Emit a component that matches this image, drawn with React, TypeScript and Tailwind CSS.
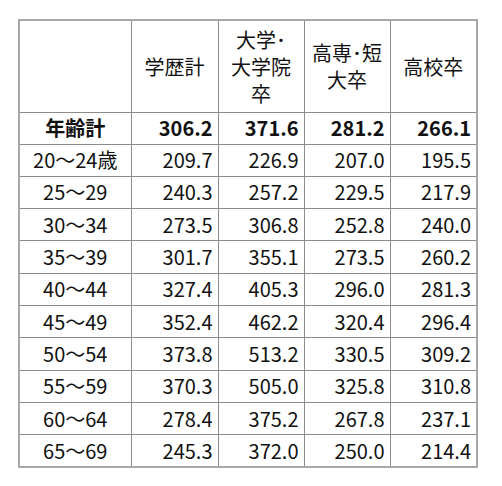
import React from 'react';

const rows: [string, string, string, string, string][] = [
  ['20～24歳', '209.7', '226.9', '207.0', '195.5'],
  ['25～29', '240.3', '257.2', '229.5', '217.9'],
  ['30～34', '273.5', '306.8', '252.8', '240.0'],
  ['35～39', '301.7', '355.1', '273.5', '260.2'],
  ['40～44', '327.4', '405.3', '296.0', '281.3'],
  ['45～49', '352.4', '462.2', '320.4', '296.4'],
  ['50～54', '373.8', '513.2', '330.5', '309.2'],
  ['55～59', '370.3', '505.0', '325.8', '310.8'],
  ['60～64', '278.4', '375.2', '267.8', '237.1'],
  ['65～69', '245.3', '372.0', '250.0', '214.4'],
];

const th = 'border border-[#8c8c8c] text-center align-middle font-normal leading-[27px] px-[2px]';
const td = 'border border-[#8c8c8c] text-right pr-[5px] align-middle';
const label = 'border border-[#8c8c8c] text-center align-middle';

export default function App() {
  return (
    <div
      className="w-[502px] h-[486px] bg-white pl-[18px] pt-[19px] text-[#111] text-[20px]"
      style={{ fontFamily: '"Noto Sans CJK JP", "Noto Sans", sans-serif' }}
    >
      <table className="border-collapse border-2 border-[#a8a8a8] table-fixed w-[458px]">
        <colgroup>
          <col className="w-[112px]" />
          <col className="w-[87px]" />
          <col className="w-[86px]" />
          <col className="w-[86px]" />
          <col className="w-[87px]" />
        </colgroup>
        <thead>
          <tr className="h-[92px]">
            <th className={th}></th>
            <th className={th}>学歴計</th>
            <th className={th}>
              大学･
              <br />
              大学院
              <br />
              卒
            </th>
            <th className={th}>
              高専･短
              <br />
              大卒
            </th>
            <th className={th}>高校卒</th>
          </tr>
        </thead>
        <tbody className="leading-[24px]">
          <tr className="h-[32px] font-bold">
            <td className={label}>年齢計</td>
            <td className={td}>306.2</td>
            <td className={td}>371.6</td>
            <td className={td}>281.2</td>
            <td className={td}>266.1</td>
          </tr>
          {rows.map(r => (
            <tr key={r[0]} className="h-[32.3px]">
              <td className={label}>{r[0]}</td>
              <td className={td}>{r[1]}</td>
              <td className={td}>{r[2]}</td>
              <td className={td}>{r[3]}</td>
              <td className={td}>{r[4]}</td>
            </tr>
          ))}
        </tbody>
      </table>
    </div>
  );
}
